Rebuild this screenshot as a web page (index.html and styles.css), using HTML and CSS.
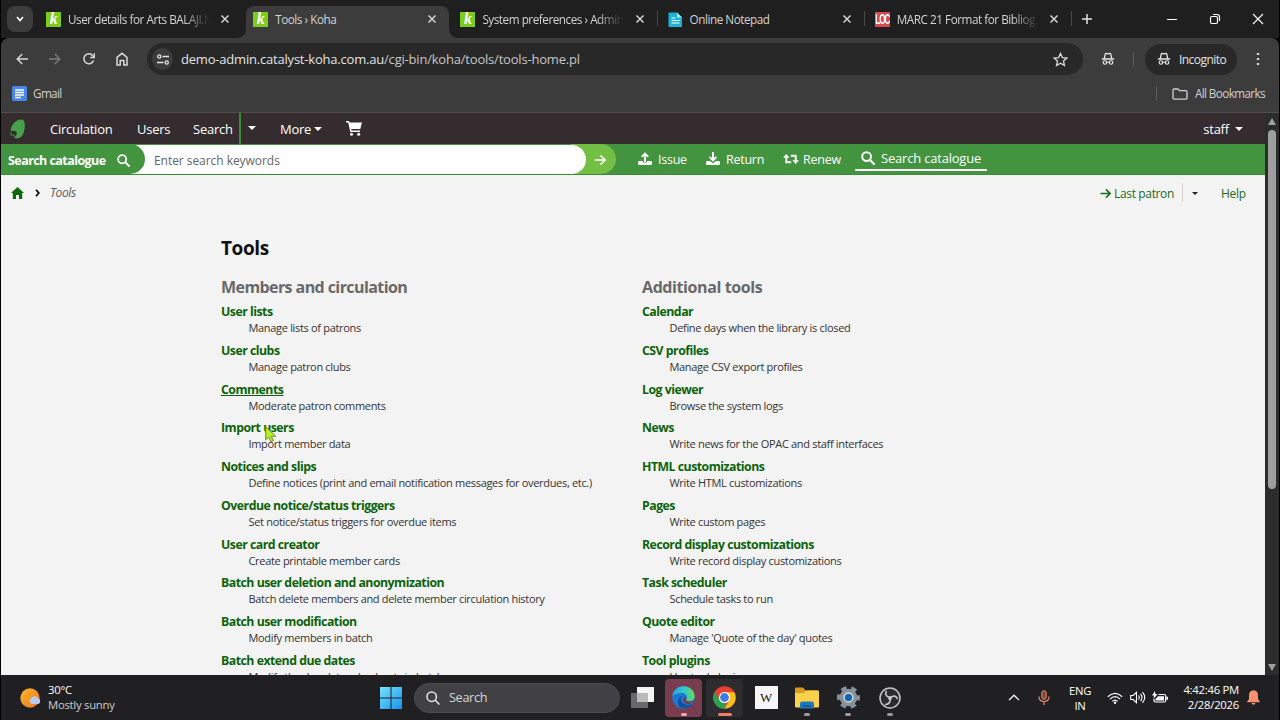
FILE: index.html
```html
<!DOCTYPE html>
<html lang="en">
<head>
  <meta charset="utf-8">
  <title>Tools › Koha</title>
  <link rel="stylesheet" href="styles.css">
</head>
<body>
  <!-- Shared icons -->
  <svg class="defs" width="0" height="0">
    <symbol id="x" viewBox="0 0 10 10"><path d="M1.5 1.5l7 7M8.500 1.500l-7 7" fill="none" stroke="currentColor" stroke-width="1.500"/></symbol>
    <symbol id="spy" viewBox="0 0 16 16"><path d="M1 8h14M3.800 7.500l1-5q.2-1 1.200-.8l2 .4 2-.4q1-.2 1.200.8l1 5" fill="none" stroke="currentColor" stroke-width="1.500"/><circle cx="4.500" cy="12" r="2" fill="none" stroke="currentColor" stroke-width="1.400"/><circle cx="11.500" cy="12" r="2" fill="none" stroke="currentColor" stroke-width="1.400"/><path d="M6.500 11.600h3" stroke="currentColor" stroke-width="1.200"/></symbol>
    <symbol id="search" viewBox="0 0 14 14"><circle cx="5.600" cy="5.600" r="4.400" fill="none" stroke="currentColor" stroke-width="1.900"/><path d="M9 9l4.200 4.200" stroke="currentColor" stroke-width="2.200" stroke-linecap="round"/></symbol>
    <symbol id="arrow" viewBox="0 0 12 12"><path d="M.5 6h10.500M6.500 1.500L11 6l-4.500 4.500" fill="none" stroke="currentColor" stroke-width="1.700"/></symbol>
  </svg>

  <div class="tabstrip">
    <div class="tabsearch"><svg width="8" height="6" viewBox="0 0 8 6"><path d="M1 1l3 3.500L7 1" fill="none" stroke="#fff" stroke-width="1.700"/></svg></div>
    <div class="tab">
      <span class="fav koha">k</span><span class="tab-title fade">User details for Arts BALAJI.M</span>
      <svg class="close"><use href="#x"/></svg>
    </div>
    <div class="tab active">
      <span class="fav koha">k</span><span class="tab-title">Tools › Koha</span>
      <svg class="close"><use href="#x"/></svg>
    </div>
    <div class="tab">
      <span class="fav koha">k</span><span class="tab-title fade">System preferences › Admini</span>
      <svg class="close"><use href="#x"/></svg>
    </div>
    <div class="tab divided">
      <svg class="fav" viewBox="0 0 15 15"><path d="M1.500.5H9L14 5.500V14a1 1 0 0 1-1 1H1.500a1 1 0 0 1-1-1V1.500a1 1 0 0 1 1-1z" fill="#18b4d6"/><path d="M9 .5L14 5.500H9z" fill="#a6ecf8"/><path d="M3.500 6h4M3.500 8.500h8M3.500 11h8" stroke="#fff" stroke-width="1.200"/></svg>
      <span class="tab-title">Online Notepad</span>
      <svg class="close"><use href="#x"/></svg>
    </div>
    <div class="tab divided last-tab">
      <span class="fav loc"><b>LOC</b></span><span class="tab-title fade">MARC 21 Format for Bibliog</span>
      <svg class="close"><use href="#x"/></svg>
    </div>
    <svg class="newtab" width="10" height="10" viewBox="0 0 10 10"><path d="M5 0v10M0 5h10" stroke="#e3e3e3" stroke-width="1.500"/></svg>
    <div class="winbtns">
      <svg width="12" height="12" viewBox="0 0 12 12"><path d="M1 6.500h10" stroke="#fff"/></svg>
      <svg width="12" height="12" viewBox="0 0 12 12"><rect x="1.500" y="3.500" width="7" height="7" rx="1.500" fill="none" stroke="#fff" stroke-width="1.200"/><path d="M4 1.500h4q2.500 0 2.500 2.500v4" fill="none" stroke="#fff" stroke-width="1.200"/></svg>
      <svg width="12" height="12" viewBox="0 0 12 12"><path d="M1 1l10 10M11 1L1 11" stroke="#fff" stroke-width="1.200"/></svg>
    </div>
  </div>

  <div class="toolbar">
    <div class="navbtns">
      <svg width="12" height="12" viewBox="0 0 12 12"><path d="M12 6H1.200M6.200 1L1.200 6l5 5" fill="none" stroke="#d8d8d8" stroke-width="1.400"/></svg>
      <svg width="12" height="12" viewBox="0 0 12 12"><path d="M0 6h10.800M5.800 1l5 5-5 5" fill="none" stroke="#7b7b7b" stroke-width="1.400"/></svg>
      <svg width="12" height="12" viewBox="0 0 12 12"><path d="M10.600 7.600A5 5 0 1 1 9.800 2.700L11 4" fill="none" stroke="#d8d8d8" stroke-width="1.500"/><path d="M11.300.3v4.200H7.200" fill="none" stroke="#d8d8d8" stroke-width="1.500"/></svg>
      <svg width="12" height="14" viewBox="0 0 12 14"><path d="M1 5.300L6 1.300l5 4V13H7.800V8.500H4.200V13H1z" fill="none" stroke="#d8d8d8" stroke-width="1.500"/></svg>
    </div>
    <div class="omnibox">
      <span class="site"><svg width="12" height="11" viewBox="0 0 12 11"><path d="M5.500 2.500H12M0 8.500h6.500" stroke="#e3e3e3" stroke-width="1.400"/><circle cx="2.300" cy="2.500" r="1.600" fill="none" stroke="#e3e3e3" stroke-width="1.300"/><circle cx="9.700" cy="8.500" r="1.600" fill="none" stroke="#e3e3e3" stroke-width="1.300"/></svg></span>
      <span class="url">demo-admin.catalyst-koha.com.au<span class="path">/cgi-bin/koha/tools/tools-home.pl</span></span>
      <svg class="star" width="15" height="15" viewBox="0 0 16 16"><path d="M8 1.500l2 4.400 4.800.5-3.600 3.200 1 4.700L8 11.900l-4.200 2.400 1-4.700L1.200 6.400 6 5.900z" fill="none" stroke="#d8d8d8" stroke-width="1.400"/></svg>
    </div>
    <svg class="ext"><use href="#spy"/></svg>
    <span class="bar-sep"></span>
    <div class="incognito"><svg><use href="#spy"/></svg>Incognito</div>
    <svg class="dots" width="4" height="14" viewBox="0 0 4 14"><path d="M.8 1h2.400v2H.8zM.8 6h2.400v2H.8zM.8 11h2.400v2H.8z" fill="#d8d8d8"/></svg>
  </div>

  <div class="bookmarks">
    <svg width="15" height="15" viewBox="0 0 15 15"><rect width="15" height="15" rx="1.500" fill="#4a86e8"/><path d="M3 4h9M3 6.500h9M3 9h9M3 11.500h6" stroke="#fff" stroke-width="1.300"/></svg>
    <span>Gmail</span>
    <div class="all-bm">
      <span class="bar-sep"></span>
      <svg width="16" height="12" viewBox="0 0 16 12"><path d="M1 2.200Q1 1 2.200 1H6l1.600 1.700h6.200q1.200 0 1.200 1.200v6q0 1.200-1.200 1.200H2.200Q1 11.100 1 9.900z" fill="none" stroke="#d0d0d0" stroke-width="1.300"/></svg>
      <span>All Bookmarks</span>
    </div>
  </div>

  <div class="viewport">
    <div class="page">
      <nav class="koha-nav">
        <svg class="leaf" width="17" height="20" viewBox="0 0 17 20"><path d="M12.500.5C6 .8 1.500 6.500 1.800 12.500c3-1.700 6.200-.8 6 2.200-.1 1.800-1.500 2.900-3.600 3.400 2.600 2 6.800 2.200 9.400-2C16.500 10.500 17 .3 12.500.5z" fill="#49a04a"/><path d="M1.500 13.500c-.3 2.500 2.600 3.900 4.500 2.100" fill="none" stroke="#3b7a3b" stroke-width="1.300"/></svg>
        <a class="n-circ">Circulation</a>
        <a class="n-users">Users</a>
        <a class="n-search">Search</a>
        <span class="n-caret"><i class="caret"></i></span>
        <a class="n-more">More <i class="caret"></i></a>
        <svg class="cart" width="16" height="15" viewBox="0 0 16 15"><path d="M0 0h2.400q.8 0 1 .8l.2.800H16l-1.700 6.400H5.200l.3 1.500h8.500v1.500H4.300L2.200 1.500H0z" fill="#fff"/><circle cx="5.500" cy="13.300" r="1.500" fill="#fff"/><circle cx="12.700" cy="13.300" r="1.500" fill="#fff"/></svg>
        <a class="n-staff">staff <i class="caret"></i></a>
      </nav>

      <div class="searchbar">
        <div class="search-label">Search catalogue <svg width="13" height="13"><use href="#search"/></svg></div>
        <div class="search-input">Enter search keywords</div>
        <div class="search-go"><svg width="12" height="12"><use href="#arrow"/></svg></div>
        <a class="act issue"><svg width="14" height="14" viewBox="0 0 14 14"><path d="M7 10V2M3.800 4.800L7 1.500l3.200 3.300" fill="none" stroke="#fff" stroke-width="1.900"/><path d="M1.200 9H5v1.500h4V9h3.800q1.200 0 1.200 1.200v1.600q0 1.200-1.200 1.200H1.200Q0 13 0 11.800v-1.600Q0 9 1.200 9z" fill="#fff"/></svg>Issue</a>
        <a class="act return"><svg width="14" height="14" viewBox="0 0 14 14"><path d="M7 0v7M3.500 4.800L7 8.300l3.500-3.500" fill="none" stroke="#fff" stroke-width="1.900"/><path d="M1.200 9H4l3 2.300L10 9h2.800q1.200 0 1.200 1.200v1.600q0 1.200-1.200 1.200H1.200Q0 13 0 11.800v-1.600Q0 9 1.200 9z" fill="#fff"/></svg>Return</a>
        <a class="act renew"><svg width="16" height="12" viewBox="0 0 16 12"><path d="M3.300 3v6.300H8.200M12.700 9V2.700H7.800" fill="none" stroke="#fff" stroke-width="1.900"/><path d="M0 4.800L3.300 1l3.300 3.800zM9.400 7.200l3.300 3.800L16 7.200z" fill="#fff"/></svg>Renew</a>
        <a class="act current"><svg width="14" height="14"><use href="#search"/></svg>Search catalogue</a>
      </div>

      <div class="crumbs">
        <svg width="13" height="12" viewBox="0 0 13 12"><path d="M6.500 0L13 6h-1.800v6H8V8H5v4H1.800V6H0z" fill="#0a6b0a"/></svg>
        <svg class="chev" width="5" height="8" viewBox="0 0 5 8"><path d="M1 .8L3.800 4 1 7.200" fill="none" stroke="#000" stroke-width="1.700"/></svg>
        <em>Tools</em>
        <a class="last"><svg width="11" height="11"><use href="#arrow"/></svg>Last patron</a>
        <span class="last-caret"><i class="caret"></i></span>
        <a class="help">Help</a>
      </div>

      <main>
        <h1>Tools</h1>
        <div class="columns">
          <section>
            <h2>Members and circulation</h2>
            <dl>
              <div><dt>User lists</dt><dd>Manage lists of patrons</dd></div>
              <div><dt>User clubs</dt><dd>Manage patron clubs</dd></div>
              <div><dt class="hover">Comments</dt><dd>Moderate patron comments</dd></div>
              <div><dt>Import users</dt><dd>Import member data</dd></div>
              <div><dt>Notices and slips</dt><dd>Define notices (print and email notification messages for overdues, etc.)</dd></div>
              <div><dt>Overdue notice/status triggers</dt><dd>Set notice/status triggers for overdue items</dd></div>
              <div><dt>User card creator</dt><dd>Create printable member cards</dd></div>
              <div><dt>Batch user deletion and anonymization</dt><dd>Batch delete members and delete member circulation history</dd></div>
              <div><dt>Batch user modification</dt><dd>Modify members in batch</dd></div>
              <div><dt>Batch extend due dates</dt><dd>Modify the due dates checkouts in batch</dd></div>
            </dl>
          </section>
          <section>
            <h2 class="wide">Additional tools</h2>
            <dl>
              <div><dt>Calendar</dt><dd>Define days when the library is closed</dd></div>
              <div><dt>CSV profiles</dt><dd>Manage CSV export profiles</dd></div>
              <div><dt>Log viewer</dt><dd>Browse the system logs</dd></div>
              <div><dt>News</dt><dd>Write news for the OPAC and staff interfaces</dd></div>
              <div><dt>HTML customizations</dt><dd>Write HTML customizations</dd></div>
              <div><dt>Pages</dt><dd>Write custom pages</dd></div>
              <div><dt>Record display customizations</dt><dd>Write record display customizations</dd></div>
              <div><dt>Task scheduler</dt><dd>Schedule tasks to run</dd></div>
              <div><dt>Quote editor</dt><dd>Manage 'Quote of the day' quotes</dd></div>
              <div><dt>Tool plugins</dt><dd>Use tool plugins</dd></div>
            </dl>
          </section>
        </div>
      </main>
    </div>
    <div class="scrollbar">
      <i class="up"></i>
      <div class="thumb"></div>
      <i class="down"></i>
    </div>
  </div>

  <div class="taskbar">
    <div class="weather">
      <svg width="22" height="20" viewBox="0 0 22 20"><defs><linearGradient id="sun" x2="1" y2="1"><stop offset="0" stop-color="#fbb829"/><stop offset="1" stop-color="#ee7420"/></linearGradient></defs><circle cx="10" cy="10" r="9.700" fill="url(#sun)"/><path d="M12 16a3 3 0 0 1-.5-5.800A3.600 3.600 0 0 1 18 10.500a2.900 2.900 0 0 1 .5 5.500z" fill="#b9cbf0"/></svg>
      <div>30°C<br><span>Mostly sunny</span></div>
    </div>
    <div class="apps">
      <svg class="start" width="22" height="22" viewBox="0 0 22 22"><defs><linearGradient id="win" x2="1" y2="1"><stop offset="0" stop-color="#74e2fb"/><stop offset="1" stop-color="#1793f0"/></linearGradient></defs><path d="M0 0h10.500v10.500H0zM11.500 0H22v10.500H11.500zM0 11.500h10.500V22H0zM11.500 11.500H22V22H11.500z" fill="url(#win)"/></svg>
      <div class="win-search"><svg width="14" height="14" viewBox="0 0 14 14"><circle cx="5.700" cy="5.700" r="4.700" fill="none" stroke="#e8e8e8" stroke-width="1.500"/><path d="M9.200 9.200l4.300 4.300" stroke="#e8e8e8" stroke-width="1.500"/></svg>Search</div>
      <div class="app"><svg width="23" height="21" viewBox="0 0 23 21"><rect x="6" width="17" height="15" fill="#f4f4f4"/><rect y="6" width="17" height="15" fill="#777" fill-opacity=".85"/><rect x="6" y="6" width="11" height="9" fill="#bbb"/></svg></div>
      <div class="app edge"><svg width="23" height="23" viewBox="0 0 23 23"><defs><linearGradient id="edg" x2="1"><stop offset="0" stop-color="#2aa5e8"/><stop offset=".55" stop-color="#34c6c8"/><stop offset="1" stop-color="#65dc58"/></linearGradient></defs><circle cx="11.500" cy="11.500" r="11.200" fill="#1b78cf"/><path d="M.4 10.500C1 4 6 .3 11.500.3 18 .3 22.700 5 22.700 10.500c0 3-2.500 5-5.200 5-2.200 0-4-.7-3.200-2.200C16 10 14 7.600 10.500 7 6.500 6.500 2 8 .4 10.500z" fill="url(#edg)"/><path d="M9.500 9.500c-2 2.500-1 7.500 3.500 9 3 1 6.300.3 8.300-1.500-2.500 4.500-8 6.500-12.500 4.500-4-2-3.500-9.500.7-12z" fill="#174e9c"/><path d="M14.300 13.300c-.8 1.500 1 2.200 3.200 2.200 2.200 0 3.800-1 4.600-2.300l.3.400c-.8 2.700-3.400 4.400-6 4.400-3.300 0-5.500-2.500-5-5 .3-1.500 1.300-2 2.300-1.700.9.300.9 1.300.6 2z" fill="#7a3c4f"/></svg><i class="dot"></i></div>
      <div class="app chrome"><svg width="23" height="23" viewBox="0 0 23 23"><circle cx="11.500" cy="11.500" r="11.300" fill="#e8412f"/><path d="M1.700 5.900L6.700 14.400l4.800 2.700-3.600 5.200A11.300 11.300 0 0 1 1.700 5.900z" fill="#2ba14b"/><path d="M21.300 6.200H11.500l5 8-5 8.600A11.300 11.300 0 0 0 21.300 6.200z" fill="#fbc116"/><path d="M7.900 22.200l4.300-6 1 3-1.700 3.600q-2 0-3.600-.6z" fill="#2ba14b"/><circle cx="11.500" cy="11.500" r="5.600" fill="#fff"/><circle cx="11.500" cy="11.500" r="4.400" fill="#3b7de0"/></svg><i class="dot wide"></i></div>
      <div class="app"><span class="wiki">W</span></div>
      <div class="app"><svg width="24" height="22" viewBox="0 0 24 22"><path d="M0 1.500Q0 .5 1 .5h7l2.500 3H23V10H0z" fill="#d99a1d"/><path d="M0 6h8.500L11 3.500h12q1 0 1 1v15q0 1-1 1H1q-1 0-1-1z" fill="#fbd14b"/><path d="M5 21.500v-5q0-2 2-2h10q2 0 2 2v5z" fill="#1f78bd"/><path d="M8 19h8" stroke="#124f87" stroke-width="1.500"/></svg><i class="dot"></i></div>
      <div class="app"><svg width="23" height="23" viewBox="0 0 23 23"><circle cx="11.500" cy="11.500" r="8.800" fill="#87929a"/><circle cx="11.500" cy="11.500" r="9.500" fill="none" stroke="#87929a" stroke-width="4" stroke-dasharray="5.300 4.650" stroke-dashoffset="2.600"/><circle cx="11.500" cy="11.500" r="5" fill="#e4eef5"/><circle cx="11.500" cy="11.500" r="3.800" fill="#1666b5"/></svg><i class="dot"></i></div>
      <div class="app"><svg width="22" height="22" viewBox="0 0 22 22"><circle cx="11" cy="11" r="10" fill="#2b2b2d" stroke="#c4c4c4" stroke-width="1.500"/><path d="M10.500 10.500C6.500 9.500 6 6.500 7.500 4M11.500 10.500c3-2.500 6-1.500 7 1.500M11 12c.5 3.700-1.700 5.700-5 5.500" fill="none" stroke="#c4c4c4" stroke-width="1.700"/><circle cx="11" cy="11" r="2" fill="#c4c4c4"/></svg><i class="dot"></i></div>
    </div>
    <div class="tray">
      <svg class="t-up" width="12" height="7" viewBox="0 0 12 7"><path d="M1 6l5-4.800L11 6" fill="none" stroke="#eee" stroke-width="1.400"/></svg>
      <svg class="t-mic" width="12" height="15" viewBox="0 0 12 15"><rect x="3.800" y=".7" width="4.400" height="8.600" rx="2.200" fill="#7c4638" stroke="#e88a70"/><path d="M1 6.500q0 5 5 5t5-5M6 11.500V15" fill="none" stroke="#e88a70" stroke-width="1.200"/></svg>
      <div class="lang">ENG<br>IN</div>
      <svg class="t-wifi" width="16" height="12" viewBox="0 0 16 12"><path d="M.8 4.800q7.200-7 14.400 0M3 7.200q5-5 10 0M5.300 9.400q2.700-2.700 5.400 0" fill="none" stroke="#fff" stroke-width="1.200"/><circle cx="8" cy="10.700" r="1.200" fill="#fff"/></svg>
      <svg class="t-vol" width="16" height="13" viewBox="0 0 16 13"><path d="M.7 4.500h2.500L6.500 1.300v10.400L3.200 8.500H.7z" fill="none" stroke="#fff" stroke-width="1.100"/><path d="M8.500 4.500q1.600 2 0 4M10.500 2.800q3 3.700 0 7.400M12.500 1.200q4.500 5.300 0 10.600" fill="none" stroke="#fff" stroke-width="1.100"/></svg>
      <svg class="t-bat" width="16" height="13" viewBox="0 0 16 13"><path d="M6.500 3.500h5.700q1.500 0 1.500 1.500v4.500q0 1.500-1.500 1.500H3.500Q2 11 2 9.500V8" fill="none" stroke="#fff" stroke-width="1.200"/><path d="M3.500 9.500V8L6 5.200h6v4.300zM14.300 5.800H16v3h-1.700z" fill="#fff"/><path d="M3 0L0 4.500h2L1.500 8 5.500 3H3.300z" fill="#fff"/></svg>
      <div class="clock">4:42:46 PM<br>2/28/2026</div>
      <svg class="t-bell" width="13" height="15" viewBox="0 0 13 15"><path d="M6.500.3q4.500.3 4.500 5.200v3.500l1.800 2.500v.8H.2v-.8L2 9V5.500Q2 .6 6.500.3zM4.500 13h4q-.5 1.800-2 1.800t-2-1.800z" fill="#ff9070"/></svg>
    </div>
  </div>

  <svg class="cursor" width="12" height="17" viewBox="0 0 12 17"><path d="M.7.8v13l3-2.700L6 15.800l2.500-1.200-2.300-4.300h4.600z" fill="#b4f01c" stroke="#5d8a1a" stroke-width=".9"/></svg>
</body>
</html>
```
FILE: styles.css
```css
* {
  box-sizing: border-box;
}

body {
  margin: 0;
  width: 1280px;
  height: 720px;
  overflow: hidden;
  display: flex;
  flex-direction: column;
  padding: 0 1px;
  background: #000;
  font-family: "Open Sans", "Noto Sans", sans-serif;
  font-size: 12px;
  letter-spacing: -0.25px;
}

svg {
  flex: none;
}

.defs {
  position: absolute;
}

/* Tabs */
.tabstrip {
  height: 38px;
  flex: none;
  display: flex;
  align-items: center;
  background: #1f1f1f;
  color: #d4d4d4;
}

.tabsearch {
  width: 26px;
  height: 26px;
  margin: 0 6px;
  border-radius: 8px;
  background: #3c3c3c;
  display: flex;
  align-items: center;
  justify-content: center;
}

.tab {
  position: relative;
  width: 207.200px;
  height: 32px;
  margin-top: 6px;
  padding: 0 16px 6px 7px;
  display: flex;
  align-items: center;
}

.tab.active::before {
  content: "";
  position: absolute;
  z-index: 0;
  inset: 0 4px 0 0;
  background: #3c3c3c;
  border-radius: 8px 8px 0 0;
}

.tab.active::after {
  content: "";
  position: absolute;
  left: -8px;
  right: -4px;
  bottom: 0;
  height: 8px;
  background:
    radial-gradient(circle at 0 0, transparent 7.5px, #3c3c3c 8px) left / 8px 8px no-repeat,
    radial-gradient(circle at 100% 0, transparent 7.5px, #3c3c3c 8px) right / 8px 8px no-repeat;
}

.tab > * {
  position: relative;
  z-index: 1;
}

.tab.divided::before,
.last-tab::after {
  content: "";
  position: absolute;
  left: -4px;
  top: 5px;
  width: 1px;
  height: 15px;
  background: #4a4a4a;
}

.last-tab::after {
  left: auto;
  right: 3px;
}

.fav {
  flex: none;
  width: 15px;
  height: 15px;
  margin-right: 7px;
}

.koha {
  background: #7ccb1d;
  color: #fff;
  font: italic bold 16px/14px "Liberation Serif", serif;
  text-align: center;
}

.loc {
  background: #d9484c;
  color: #fff;
  font: bold 8px/15px "Liberation Sans", sans-serif;
  letter-spacing: -0.9px;
  text-align: center;
}

/* tall condensed letters */
.loc b {
  display: block;
  transform: scaleY(1.9);
}

.tab-title {
  width: 150px;
  font-size: 11.700px;
  letter-spacing: -0.45px;
  white-space: nowrap;
}

.fade {
  -webkit-mask-image: linear-gradient(to right, #000 115px, transparent 142px);
}

.close {
  width: 10px;
  height: 10px;
  margin-left: auto;
}

.newtab {
  margin-left: 7px;
}

.winbtns {
  margin-left: auto;
  margin-right: 15px;
  display: flex;
  gap: 31px;
}

/* Address bar */
.toolbar {
  height: 42px;
  flex: none;
  display: flex;
  align-items: center;
  background: #3c3c3c;
  color: #e3e3e3;
  border-radius: 8px 8px 0 0;
}

.navbtns {
  width: 146px;
  padding-left: 14.500px;
  display: flex;
  align-items: center;
  gap: 21.6px;
}

.omnibox {
  width: 936px;
  height: 32px;
  border-radius: 16px;
  background: #282828;
  display: flex;
  align-items: center;
  padding: 0 15px 0 5px;
}

.site {
  width: 21px;
  height: 22px;
  border-radius: 50%;
  background: #3c3c3c;
  display: flex;
  align-items: center;
  justify-content: center;
}

.url {
  margin-left: 8px;
  font-size: 13px;
  letter-spacing: -0.2px;
}

.path {
  color: #c7c7c7;
}

.star {
  margin-left: auto;
}

.ext {
  width: 14px;
  height: 14px;
  margin-left: 18px;
}

.bar-sep {
  width: 1px;
  height: 15px;
  background: #5c5c5c;
}

.toolbar .bar-sep {
  margin: 0 11px 0 18px;
}

.incognito {
  width: 92px;
  height: 31px;
  border-radius: 16px;
  background: #282828;
  display: flex;
  align-items: center;
  gap: 8px;
  padding-left: 12px;
  letter-spacing: -0.55px;
}

.incognito svg {
  width: 14px;
  height: 14px;
}

.dots {
  margin-left: 19px;
}

/* Bookmarks */
.bookmarks {
  height: 33px;
  flex: none;
  display: flex;
  align-items: center;
  gap: 6px;
  padding: 0 14px 5px 11px;
  background: #3c3c3c;
  border-bottom: 1px solid #505050;
  color: #d0d0d0;
  font-size: 11.700px;
  letter-spacing: -0.6px;
}

.bookmarks span {
  margin-top: -1px;
}

.all-bm {
  margin-left: auto;
  display: flex;
  align-items: center;
  gap: 7px;
}

.all-bm .bar-sep {
  margin-right: 8px;
}

/* Koha page */
.viewport {
  height: 562px;
  flex: none;
  display: flex;
}

.page {
  width: 1264px;
  background: #f3f3f3;
  overflow: hidden;
}

.caret {
  display: inline-block;
  border: 4px solid transparent;
  border-top-color: currentColor;
  border-bottom: 0;
  vertical-align: 3px;
}

.koha-nav {
  height: 31px;
  display: flex;
  align-items: center;
  background: #352c2f;
  color: #fff;
  font-size: 13px;
}

.leaf {
  margin-left: 8px;
}

.n-circ {
  width: 87px;
  margin-left: 24px;
}

.n-users {
  width: 56px;
}

.n-search {
  width: 46px;
}

.n-caret {
  height: 31px;
  line-height: 30px;
  width: 41px;
  padding-left: 7px;
  border-left: 2px solid #3b8c3a;
}

.n-more {
  width: 66px;
}

.n-staff {
  margin-left: auto;
  margin-right: 22px;
}

.n-staff .caret {
  margin-left: 3px;
}

.searchbar {
  height: 31px;
  display: flex;
  align-items: center;
  background: #43943f;
  color: #fff;
  border-bottom: 1px solid #3b8a37;
}

.search-label {
  position: relative;
  z-index: 2;
  width: 144px;
  height: 30px;
  padding: 2px 0 0 7px;
  border-radius: 0 15px 15px 0;
  background: #43943f;
  display: flex;
  align-items: center;
  gap: 11px;
  font-weight: 700;
  font-size: 12.5px;
  letter-spacing: -0.56px;
}

.search-input {
  position: relative;
  z-index: 1;
  width: 456px;
  height: 29px;
  margin-left: -15px;
  padding-left: 24px;
  border-radius: 0 15px 15px 0;
  background: #fff;
  color: #666;
  font-size: 12px;
  line-height: 31px;
  letter-spacing: -0.05px;
}

.search-go {
  width: 45px;
  height: 30px;
  margin-left: -15px;
  padding: 1px 10px 0 0;
  border-radius: 0 15px 15px 0;
  background: #72bf43;
  display: flex;
  align-items: center;
  justify-content: flex-end;
}

.act {
  display: flex;
  align-items: center;
  gap: 6px;
  height: 21px;
  font-size: 12.5px;
  white-space: nowrap;
}

.issue {
  width: 68px;
  margin-left: 22px;
}

.return {
  width: 77px;
}

.renew {
  width: 72px;
  gap: 4px;
}

.current {
  height: 23px;
  width: 132px;
  padding: 0 5px 0 6px;
  border-bottom: 2px solid #fff;
  font-size: 13px;
  letter-spacing: -0.2px;
}

.crumbs {
  height: 35px;
  display: flex;
  align-items: center;
  margin-bottom: 1px;
  padding-left: 10px;
  color: #1c6b1c;
}

.crumbs .chev {
  margin: 0 10px 0 11px;
}

.crumbs em {
  color: #5a5a5a;
  letter-spacing: -0.4px;
}

.last {
  margin-left: auto;
  margin-right: 1px;
  padding-top: 1px;
  display: flex;
  align-items: center;
  gap: 3px;
  letter-spacing: -0.35px;
}

.last-caret {
  margin-left: 7px;
  width: 39px;
  height: 19px;
  padding-left: 9px;
  border-left: 1px solid #d2d2d2;
  color: #222;
}

.last-caret .caret {
  border-width: 3px 3px 0;
  vertical-align: 1px;
}

.help {
  width: 44px;
  padding-top: 1px;
}

main {
  padding: 25px 0 0 220px;
}

h1 {
  margin: 0;
  font-size: 19px;
  line-height: 24px;
  font-weight: 700;
  letter-spacing: -0.4px;
  color: #111;
}

.columns {
  display: grid;
  grid-template-columns: 421px 1fr;
  margin-top: 16px;
}

h2 {
  margin: 0;
  font-size: 16px;
  line-height: 22px;
  font-weight: 700;
  letter-spacing: -0.58px;
  color: #696969;
}

h2.wide {
  letter-spacing: -0.4px;
}

dl {
  margin: 5px 0 0;
}

dl div {
  height: 38.750px;
}

dt {
  width: max-content;
  font-size: 12.300px;
  line-height: 17px;
  font-weight: 700;
  letter-spacing: -0.5px;
  color: #0b6409;
}

dt.hover {
  text-decoration: underline;
}

dd {
  margin: 0 0 0 27.500px;
  font-size: 11px;
  line-height: 16px;
  letter-spacing: -0.32px;
  color: #333;
  white-space: nowrap;
}

.scrollbar {
  width: 14px;
  background: #2c2c2c;
  display: flex;
  flex-direction: column;
  align-items: center;
}

.up,
.down {
  border: 4.500px solid transparent;
}

.up {
  margin-top: 5px;
  border-top: 0;
  border-bottom: 7px solid #9f9f9f;
}

.thumb {
  width: 8px;
  height: 359px;
  margin-top: 5px;
  border-radius: 4px;
  background: #9f9f9f;
}

.down {
  margin-top: auto;
  margin-bottom: 4px;
  border-bottom: 0;
  border-top: 7px solid #9f9f9f;
}

/* Windows taskbar */
.taskbar {
  height: 45px;
  flex: none;
  display: flex;
  align-items: center;
  background: #202022;
  color: #fff;
  font-size: 11.300px;
  line-height: 15px;
}

.weather {
  width: 379px;
  padding-left: 19px;
  display: flex;
  align-items: center;
  gap: 6px;
}

.weather div {
  margin-top: -1px;
}

.weather span {
  color: #ccc;
}

.apps {
  display: flex;
  align-items: center;
}

.win-search {
  width: 206px;
  height: 30px;
  margin: 0 4px 0 12px;
  padding-left: 11px;
  border-radius: 15px;
  background: #414145;
  border: 1px solid #4b4b4f;
  display: flex;
  align-items: center;
  gap: 9px;
  font-size: 12.700px;
  letter-spacing: -0.35px;
  color: #d6d6d6;
}

.app {
  position: relative;
  width: 37px;
  height: 38px;
  margin-right: 4.200px;
  border-radius: 4px;
  display: flex;
  align-items: center;
  justify-content: center;
}

.edge {
  background: #7a3c4f;
}

.chrome {
  background: #2d2d30;
}

.dot {
  position: absolute;
  bottom: 1px;
  left: 50%;
  width: 6px;
  height: 3px;
  margin-left: -3px;
  border-radius: 2px;
  background: #9a9a9c;
}

.edge .dot {
  background: #f4a3b4;
}

.dot.wide {
  width: 14px;
  margin-left: -7px;
  background: #ee7b6c;
}

.wiki {
  width: 23px;
  height: 23px;
  background: #f6f6f6;
  color: #222;
  font: 13px/23px "Liberation Serif", serif;
  text-align: center;
}

.tray {
  margin-left: auto;
  margin-right: 19px;
  display: flex;
  align-items: center;
}

.t-mic {
  margin-left: 18px;
}

.lang {
  width: 24px;
  margin: 0 15px 0 18px;
  text-align: center;
}

.t-vol {
  margin: 0 6px 0 7px;
}

.clock {
  width: 58px;
  margin: -1px 8px 0 13px;
  text-align: right;
  white-space: nowrap;
}

.cursor {
  position: absolute;
  left: 265px;
  top: 426px;
}
```
